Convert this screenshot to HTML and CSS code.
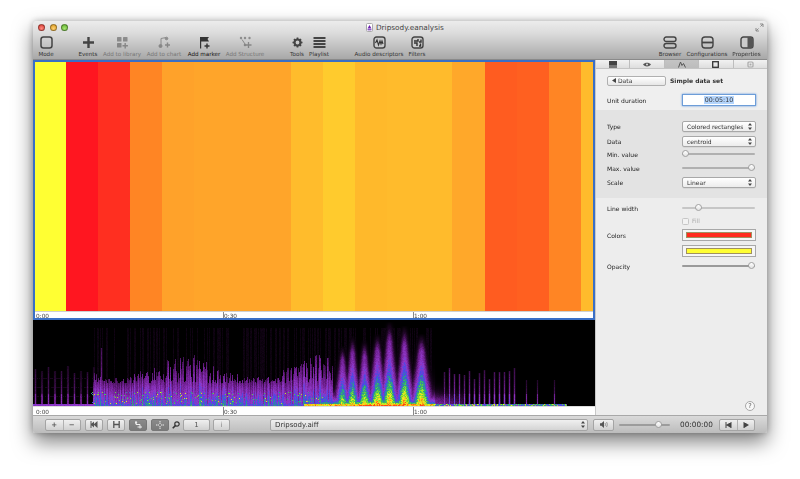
FILE: index.html
```html
<!DOCTYPE html>
<html lang="en">
<head>
<meta charset="utf-8">
<title>Dripsody.eanalysis</title>
<link rel="stylesheet" href="styles.css">
</head>
<body>
<div class="window">
  <header class="titlebar">
    <div class="lights"><i class="light red"></i><i class="light amber"></i><i class="light green"></i></div>
    <div class="title">
      <svg class="doc" width="7" height="9" viewBox="0 0 7 9"><rect x=".5" y=".5" width="6" height="8" rx="1" fill="#fff" stroke="#aaa"/><path d="M1.500 5.500 3.500 2l2 3.500z" fill="#6a1fb0"/><rect x="1.500" y="6" width="4" height="1.400" fill="#8a5ac0"/></svg>
      <span>Dripsody.eanalysis</span>
    </div>
    <svg class="fullscreen" width="9" height="9" viewBox="0 0 9 9"><path d="M5 1h3v3M8 1 5.500 3.500M4 8H1V5M1 8l2.500-2.500" fill="none" stroke="#8a8a8a" stroke-width="1"/></svg>
  </header>
  <nav class="toolbar">
    <div class="tool w26"><svg width="13" height="13" viewBox="0 0 13 13"><rect x="1" y="1" width="11" height="11" rx="2.500" fill="none" stroke="#444" stroke-width="1.500"/></svg><span>Mode</span></div>
    <div class="tool w26 ml16"><svg width="13" height="13" viewBox="0 0 13 13"><path d="M6.500 1v11M1 6.500h11" stroke="#444" stroke-width="2.400" fill="none"/></svg><span>Events</span></div>
    <div class="tool w42 off"><svg width="13" height="13" viewBox="0 0 13 13" fill="#555"><rect x="1" y="1" width="4.500" height="4.500" rx=".6"/><rect x="7" y="1" width="4.500" height="4.500" rx=".6"/><rect x="1" y="7" width="4.500" height="4.500" rx=".6"/><path d="M8.500 7h1.400v2h2v1.400h-2v2H8.500v-2h-2V9h2z"/></svg><span>Add to library</span></div>
    <div class="tool w42 off"><svg width="13" height="13" viewBox="0 0 13 13" fill="none" stroke="#555"><path d="M3 9V2.500L8 1.500"/><circle cx="2.500" cy="10" r="1.500" fill="#555"/><circle cx="8.500" cy="2.500" r="1.300" fill="#555"/><path d="M9.500 6.500v5M7 9h5" stroke-width="1.400"/></svg><span>Add to chart</span></div>
    <div class="tool w38 dark"><svg width="13" height="13" viewBox="0 0 13 13"><path d="M2 12.500V1h9l-1.500 2L11 5.500H3.200v7z" fill="#333"/><path d="M9 7.500v5M6.500 10h5" stroke="#333" stroke-width="1.400"/></svg><span>Add marker</span></div>
    <div class="tool w44 off"><svg width="13" height="13" viewBox="0 0 13 13" fill="#555"><circle cx="2" cy="2" r="1.200"/><circle cx="6" cy="2" r="1.200"/><circle cx="10.500" cy="2" r="1.200"/><path d="M3 3.500 6 8" stroke="#555" fill="none"/><circle cx="6" cy="9" r="1.300"/><path d="M9.500 6v6M7 9h5.500" stroke="#555" stroke-width="1.300" fill="none"/></svg><span>Add Structure</span></div>
    <div class="tool w24 ml18"><svg width="13" height="13" viewBox="0 0 13 13"><circle cx="6.500" cy="6.500" r="3" fill="none" stroke="#444" stroke-width="2.200"/><path d="M6.500 1.500v2M6.500 9.500v2M1.500 6.500h2M9.500 6.500h2M3 3l1.500 1.500M8.500 8.500 10 10M3 10l1.500-1.500M8.500 4.500 10 3" stroke="#444" stroke-width="1.700"/></svg><span>Tools</span></div>
    <div class="tool w20"><svg width="13" height="13" viewBox="0 0 13 13"><path d="M.5 2h12M.5 5h12M.5 8h12M.5 11h12" stroke="#444" stroke-width="1.800"/></svg><span>Playlist</span></div>
    <div class="tool w60 ml20"><svg width="13" height="13" viewBox="0 0 13 13"><rect x="1" y="1" width="11" height="11" rx="2.500" fill="#ccc" stroke="#444" stroke-width="1.400"/><path d="M2.500 7 4 4l1.500 5 1.500-4 1 3 1-3 1 3" fill="none" stroke="#333" stroke-width="1.100"/></svg><span>Audio descriptors</span></div>
    <div class="tool w16"><svg width="13" height="13" viewBox="0 0 13 13"><rect x="1" y="1" width="11" height="11" rx="2.500" fill="#ccc" stroke="#444" stroke-width="1.400"/><path d="M3 5h4V3M3 7h3v3M10 3.500V6H8M9.500 7.500V10H8" fill="none" stroke="#333" stroke-width="1.400"/></svg><span>Filters</span></div>
    <div class="spring"></div>
    <div class="tool w36"><svg width="14" height="13" viewBox="0 0 14 13" fill="none" stroke="#444" stroke-width="1.400"><rect x="1" y="1" width="12" height="4.500" rx="2.200"/><rect x="1" y="7.500" width="12" height="4.500" rx="2.200"/></svg><span>Browser</span></div>
    <div class="tool w38"><svg width="13" height="13" viewBox="0 0 13 13" fill="none" stroke="#444" stroke-width="1.400"><rect x="1" y="1" width="11" height="11" rx="3"/><path d="M1 6.500h11" stroke-width="1.800"/></svg><span>Configurations</span></div>
    <div class="tool w41"><svg width="14" height="13" viewBox="0 0 14 13"><rect x="1" y="1" width="12" height="11" rx="2.500" fill="#ccc" stroke="#444" stroke-width="1.400"/><path d="M7.500 1H10.500a2.500 2.500 0 0 1 2.500 2.500v6a2.500 2.500 0 0 1-2.500 2.500H7.500z" fill="#555"/></svg><span>Properties</span></div>
  </nav>
  <div class="main">
    <section class="views">
      <div class="chart">
        <div class="bars">
          <i style="width:31px;background:#ffff33"></i>
          <i style="width:32px;background:#ff1620"></i>
          <i style="width:32px;background:#ff2f20"></i>
          <i style="width:32px;background:#ff8524"></i>
          <i style="width:32px;background:#ffa22a"></i>
          <i style="width:32px;background:#ffa52a"></i>
          <i style="width:32px;background:#ffa52a"></i>
          <i style="width:33px;background:#ffa52a"></i>
          <i style="width:32px;background:#ffbc2c"></i>
          <i style="width:32px;background:#ffcb2d"></i>
          <i style="width:32px;background:#ffb92b"></i>
          <i style="width:33px;background:#ffbb2c"></i>
          <i style="width:32px;background:#ffbb2c"></i>
          <i style="width:33px;background:#ffa82a"></i>
          <i style="width:32px;background:#ff5c20"></i>
          <i style="width:32px;background:#ff6020"></i>
          <i style="width:32px;background:#ff8524"></i>
          <i style="width:12px;background:#ffbb2c"></i>
        </div>
        <div class="ruler chart-ruler">
          <span class="tick first">0:00</span><span class="tick">0:30</span><span class="tick">1:00</span>
        </div>
      </div>
      <canvas id="spectrogram" class="spectrogram" width="562" height="86"></canvas>
      <div class="ruler spec-ruler">
        <span class="tick first">0:00</span><span class="tick">0:30</span><span class="tick">1:00</span>
      </div>
    </section>
    <aside class="panel">
      <div class="tabs">
        <div class="tab"><svg width="8" height="7" viewBox="0 0 8 7"><rect width="8" height="7" fill="#444"/><rect y="4" width="8" height="3" fill="#777"/></svg></div>
        <div class="tab"><svg width="8" height="5" viewBox="0 0 8 5"><path d="M0 2.500C2 0 6 0 8 2.500 6 5 2 5 0 2.500z" fill="#555"/><circle cx="4" cy="2.500" r="1" fill="#ddd"/></svg></div>
        <div class="tab on"><svg width="8" height="7" viewBox="0 0 8 7"><path d="M.5 6.500 2.500 1 4 4.500 5.500 2.500 7.500 6.500" fill="none" stroke="#555" stroke-width="1"/></svg></div>
        <div class="tab"><svg width="7" height="7" viewBox="0 0 7 7"><rect x=".7" y=".7" width="5.600" height="5.600" fill="none" stroke="#333" stroke-width="1.300"/></svg></div>
        <div class="tab"><svg width="7" height="7" viewBox="0 0 7 7"><rect x="1" y="1" width="5" height="5" rx="1" fill="none" stroke="#aaa" stroke-width="1.200"/><circle cx="3.500" cy="3.500" r="1" fill="#aaa"/></svg></div>
      </div>
      <div class="sec sec-a">
        <div class="head">
          <div class="back"><svg width="4" height="5" viewBox="0 0 4 5"><path d="M4 0v5L0 2.500z" fill="#444"/></svg><span>Data</span></div>
          <strong>Simple data set</strong>
        </div>
        <div class="row gap8">
          <label>Unit duration</label>
          <div class="input"><span>00:05:10</span></div>
        </div>
      </div>
      <div class="sec sec-b">
        <div class="row">
          <label>Type</label>
          <div class="select"><span>Colored rectangles</span><svg class="updown" width="4" height="7" viewBox="0 0 4 7"><path d="M2 0 4 2.500H0zM2 7 0 4.500h4z" fill="#444"/></svg></div>
        </div>
        <div class="row gap3">
          <label>Data</label>
          <div class="select"><span>centroid</span><svg class="updown" width="4" height="7" viewBox="0 0 4 7"><path d="M2 0 4 2.500H0zM2 7 0 4.500h4z" fill="#444"/></svg></div>
        </div>
        <div class="row gap1">
          <label>Min. value</label>
          <div class="slider"><b class="knob" style="left:0"></b></div>
        </div>
        <div class="row gap2">
          <label>Max. value</label>
          <div class="slider"><b class="knob" style="left:66px"></b></div>
        </div>
        <div class="row gap2">
          <label>Scale</label>
          <div class="select"><span>Linear</span><svg class="updown" width="4" height="7" viewBox="0 0 4 7"><path d="M2 0 4 2.500H0zM2 7 0 4.500h4z" fill="#444"/></svg></div>
        </div>
      </div>
      <div class="sec sec-c">
        <div class="row">
          <label>Line width</label>
          <div class="slider faint"><b class="knob" style="left:13px"></b></div>
        </div>
        <div class="row gap1">
          <label></label>
          <div class="check"><i></i><span>Fill</span></div>
        </div>
        <div class="row gap2">
          <label>Colors</label>
          <div class="swatch"><i class="sw-red"></i></div>
        </div>
        <div class="row gap4">
          <label></label>
          <div class="swatch"><i class="sw-yellow"></i></div>
        </div>
        <div class="row gap3">
          <label>Opacity</label>
          <div class="slider dark-track"><b class="knob" style="left:66px"></b></div>
        </div>
        <div class="help-row"><div class="help">?</div></div>
      </div>
    </aside>
  </div>
  <footer class="statusbar">
    <div class="btn seg w36"><span>+</span><span>−</span></div>
    <div class="btn w18"><svg width="8" height="7" viewBox="0 0 8 7"><path d="M3.500 3.500 7.500 0v7zM.5 3.500 4 .5v6zM.5 0h1v7h-1z" fill="#555"/></svg></div>
    <div class="btn w18"><svg width="7" height="7" viewBox="0 0 7 7"><path d="M.8 0v7M6.200 0v7M.8 3.500h5.400" stroke="#555" stroke-width="1.300" fill="none"/></svg></div>
    <div class="btn w18 sel"><svg width="7" height="8" viewBox="0 0 7 8"><path d="M1 .5v3h4v4M1 2h-1l1-1.500 1 1.500zM2.500 6H7" stroke="#eee" fill="none"/></svg></div>
    <div class="btn w18 sel"><svg width="8" height="8" viewBox="0 0 8 8"><path d="M4 0v3M4 5v3M0 4h3M5 4h3" stroke="#eee" stroke-width="1" stroke-dasharray="1.500 .5"/></svg></div>
    <svg class="mag" width="8" height="8" viewBox="0 0 8 8"><circle cx="5" cy="3" r="2.200" fill="none" stroke="#333" stroke-width="1.200"/><path d="M3.400 4.600.7 7.300" stroke="#333" stroke-width="1.500"/></svg>
    <div class="btn w27 tight">1</div>
    <div class="btn w17 tight faint-text">i</div>
    <div class="file"><span>Dripsody.aiff</span><svg class="updown" width="4" height="7" viewBox="0 0 4 7"><path d="M2 0 4 2.500H0zM2 7 0 4.500h4z" fill="#444"/></svg></div>
    <div class="btn w21 near"><svg width="8" height="7" viewBox="0 0 8 7"><path d="M0 2.200h1.500L4 0v7L1.500 4.800H0z" fill="#555"/><path d="M5 2c.6.800.6 2.200 0 3M6.500 1c1 1.400 1 3.600 0 5" fill="none" stroke="#777" stroke-width=".7"/></svg></div>
    <div class="slider volume"><b class="knob" style="left:36px"></b></div>
    <div class="time">00:00:00</div>
    <div class="btn seg w36 transport">
      <span><svg width="7" height="6" viewBox="0 0 7 6"><path d="M.5 0h1v6h-1zM5.500 0h1v6h-1zM1 3 6 0v6z" fill="#444"/></svg></span>
      <span><svg width="6" height="6" viewBox="0 0 6 6"><path d="M.5 0h1v6h-1zM1 0l5 3-5 3z" fill="#444"/></svg></span>
    </div>
  </footer>
</div>
<script src="script.js"></script>
</body>
</html>
```

FILE: styles.css
```css
* { box-sizing: border-box; }
html, body { margin: 0; height: 100%; background: #fff; overflow: hidden; }
body { padding: 21px 33px 0; font-family: "DejaVu Sans", sans-serif; color: #333; }

.window {
  width: 734px; height: 412px; display: flex; flex-direction: column;
  border-radius: 4px 4px 2px 2px; background: #ededed;
  box-shadow: 0 9px 20px rgba(0,0,0,.5), 0 0 6px rgba(0,0,0,.25);
  filter: blur(.3px);
}

.titlebar {
  height: 12px; flex: none; display: flex; align-items: center; position: relative;
  background: linear-gradient(#ececec, #dcdcdc); border-radius: 4px 4px 0 0;
  padding-top: 1px;
}
.lights { display: flex; gap: 4.500px; margin-left: 5px; }
.light { width: 7px; height: 7px; border-radius: 50%; border: .5px solid rgba(0,0,0,.35); }
.red { background: radial-gradient(circle at 50% 70%, #ff8a80, #d8392f); }
.amber { background: radial-gradient(circle at 50% 70%, #ffd070, #d99a20); }
.green { background: radial-gradient(circle at 50% 70%, #a8e870, #5fae2f); }
.title { display: flex; align-items: center; gap: 3px; font-size: 7.300px; color: #444; margin-left: 298px; }
.fullscreen { margin-left: auto; margin-right: 3px; }

.toolbar {
  height: 27px; flex: none; display: flex; align-items: flex-start;
  background: linear-gradient(#dcdcdc, #a8a8a8); border-bottom: 1px solid #8a8a8a;
}
.tool { display: flex; flex-direction: column; align-items: center; flex: none; padding-top: 3px; }
.tool span { font-size: 5.600px; line-height: 8px; margin-top: 1px; color: #333; white-space: nowrap; }
.tool.off svg { opacity: .55; }
.tool.off span { color: #777; }
.tool.dark span { color: #111; }
.w16 { width: 16px; } .w20 { width: 20px; } .w24 { width: 24px; } .w26 { width: 26px; }
.w36 { width: 36px; } .w38 { width: 38px; } .w41 { width: 41px; } .w42 { width: 42px; }
.w44 { width: 44px; } .w60 { width: 60px; } .w18 { width: 18px; } .w27 { width: 27px; }
.w17 { width: 17px; } .w21 { width: 21px; }
.ml16 { margin-left: 16px; } .ml18 { margin-left: 18px; } .ml20 { margin-left: 20px; }
.spring { flex: 1; }

.main { height: 355px; flex: none; display: flex; }
.views { width: 562px; flex: none; display: flex; flex-direction: column; background: #fff; }
.chart { height: 260px; flex: none; border: 2px solid #3a6fc6; display: flex; flex-direction: column; }
.bars { flex: 1; display: flex; }
.bars i { display: block; flex: none; }
.ruler { display: flex; background: #fff; font-size: 5.800px; color: #444; flex: none; overflow: hidden; }
.chart-ruler { height: 7px; line-height: 8px; border-top: 1px solid #d0d0d0; }
.spec-ruler { height: 9px; line-height: 10px; padding-left: 2px; border-top: 1px solid #ddd; }
.tick { flex: none; width: 190px; border-left: 1px solid #888; }
.tick.first { width: 188px; border-left: 0; padding-left: 1px; }
.spectrogram { display: block; width: 562px; height: 86px; background: #000; flex: none; filter: blur(.5px); }

.panel { width: 172px; flex: none; display: flex; flex-direction: column; border-left: 1px solid #c8c8c8; background: #ededed; }
.tabs { height: 9px; flex: none; display: flex; background: linear-gradient(#f2f2f2, #dedede); border-bottom: 1px solid #c4c4c4; }
.tab { flex: 1; display: flex; align-items: center; justify-content: center; border-right: 1px solid #bdbdbd; }
.tab:last-child { border-right: 0; }
.tab.on { background: linear-gradient(#c4c4c4, #bcbcbc); }
.sec { padding-left: 11px; padding-right: 11px; }
.sec-a { height: 41px; flex: none; padding-top: 6px; background: #efefef; }
.sec-b { height: 88px; flex: none; padding-top: 10px; background: #e3e3e3; }
.sec-c { flex: 1; padding-top: 4px; display: flex; flex-direction: column; }
.head { display: flex; align-items: center; height: 11px; }
.back { width: 59px; height: 10px; display: flex; align-items: center; gap: 2px; padding-left: 4px; font-size: 6px; color: #333;
  border: 1px solid #b0b0b0; border-radius: 2px; background: linear-gradient(#fff, #e6e6e6); }
.head strong { margin-left: 4px; font-size: 6px; font-weight: 700; color: #333; }
.row { display: flex; align-items: center; height: 12px; flex: none; }
.row label { width: 75px; flex: none; font-size: 6px; color: #222; }
.gap1 { margin-top: 1px; } .gap2 { margin-top: 2px; } .gap3 { margin-top: 3px; } .gap4 { margin-top: 4px; } .gap8 { margin-top: 8px; }
.input { width: 75px; height: 12px; display: flex; align-items: center; justify-content: center; background: #fff;
  border: 1px solid #6d9dd8; box-shadow: 0 0 2px #5a94dc; font-size: 6.300px; color: #333; }
.input span { background: #b3d4fc; padding: 0 1px; line-height: 8px; }
.select { width: 74px; height: 11px; display: flex; align-items: center; justify-content: space-between; padding: 0 3px 0 4px;
  background: linear-gradient(#fff, #ececec); border: 1px solid #a8a8a8; border-radius: 2px; font-size: 6px; color: #333; box-shadow: 0 .5px 0 rgba(0,0,0,.1); }
.slider { width: 73px; height: 2px; background: #b0b0b0; border-radius: 1px; position: relative; }
.slider.faint { background: #c6c6c6; }
.slider.dark-track { background: #9a9a9a; }
.knob { position: absolute; top: -3px; width: 7px; height: 7px; border-radius: 50%; background: linear-gradient(#fff, #e2e2e2); border: 1px solid #a0a0a0; }
.check { display: flex; align-items: center; gap: 3px; font-size: 5.800px; color: #aaa; }
.check i { width: 7px; height: 7px; border: 1px solid #c6c6c6; border-radius: 1.500px; background: #f2f2f2; }
.swatch { width: 75px; height: 12px; padding: 2px 3px; background: #f6f6f6; border: 1px solid #a8a8a8; display: flex; }
.swatch i { flex: 1; border: .5px solid #a09060; }
.sw-red { background: #ff2a1c; }
.sw-yellow { background: #ffff33; }
.help-row { margin-top: auto; display: flex; justify-content: flex-end; padding: 0 2px 4px 0; margin-right: -1px; }
.help { width: 10px; height: 10px; border-radius: 50%; border: 1px solid #a8a8a8; background: #f8f8f8; font-size: 6.500px; line-height: 8px; text-align: center; color: #555; }

.statusbar { height: 18px; flex: none; display: flex; align-items: center; gap: 4px; padding-left: 12px;
  background: linear-gradient(#dadada, #bcbcbc); border-top: 1px solid #a8a8a8; border-radius: 0 0 2px 2px; }
.btn { height: 12px; flex: none; display: flex; align-items: center; justify-content: center; font-size: 7px; color: #555;
  border: 1px solid #a4a4a4; border-radius: 2px; background: linear-gradient(#f0f0f0, #d0d0d0); }
.btn.sel { background: linear-gradient(#8a8a8a, #7a7a7a); border-color: #777; }
.seg span { flex: 1; display: flex; align-items: center; justify-content: center; height: 100%; font-weight: 700; }
.seg span + span { border-left: 1px solid #b0b0b0; }
.mag { flex: none; margin-left: -1px; }
.tight { margin-left: -1px; }
.faint-text { color: #888; }
.file { width: 318px; height: 12px; flex: none; margin-left: 36px; display: flex; align-items: center; justify-content: space-between; padding: 0 2px 0 4px;
  font-size: 7px; color: #333; border: 1px solid #a4a4a4; border-radius: 2px; background: linear-gradient(#f0f0f0, #d4d4d4); }
.near { margin-left: 1px; }
.slider.volume { width: 51px; flex: none; margin-left: 1px; background: #9c9c9c; }
.time { width: 33px; flex: none; font-size: 7.300px; color: #333; margin-left: 6px; margin-right: 2px; white-space: nowrap; }
```

FILE: script.js
```js
(function () {
  var canvas = document.getElementById('spectrogram');
  var ctx = canvas.getContext('2d');
  var W = canvas.width, H = canvas.height;
  var seed = 12345;
  function rnd() { seed = (seed * 1664525 + 1013904223) >>> 0; return seed / 4294967296; }

  var stops = [
    [0.00, 0, 0, 0], [0.10, 30, 6, 36], [0.26, 105, 28, 135], [0.42, 145, 55, 200],
    [0.54, 70, 75, 230], [0.66, 40, 170, 120], [0.76, 120, 220, 50],
    [0.86, 240, 240, 30], [0.95, 255, 150, 20], [1.00, 255, 70, 20]
  ];
  function colour(v) {
    v = Math.max(0, Math.min(1, v));
    for (var i = 1; i < stops.length; i++) {
      if (v <= stops[i][0]) {
        var a = stops[i - 1], b = stops[i], t = (v - a[0]) / (b[0] - a[0]);
        return [a[1] + (b[1] - a[1]) * t, a[2] + (b[2] - a[2]) * t, a[3] + (b[3] - a[3]) * t];
      }
    }
    return [255, 70, 20];
  }

  /* per-column loudness and reach, for the dense part of the recording */
  var colAmp = [], colTop = [];
  for (var k = 0; k < W; k++) { colAmp.push(rnd()); colTop.push(rnd()); }

  var spikes = [];
  var x;
  for (x = 2; x < 62; x += 6.5) spikes.push([x, 32 + rnd() * 8, 0.22 + rnd() * 0.07, 0.9]);
  spikes.push([68, 58, 0.34, 1]);
  for (x = 411; x < 484; x += 5) spikes.push([x, 26 + rnd() * 12, 0.3 + rnd() * 0.1, 0.9]);
  [493, 504, 521].forEach(function (p) { spikes.push([p, 26, 0.22, 0.7]); });

  var peaks = [
    [291, 32, 0.72, 3], [309, 60, 0.86, 3.5], [319, 70, 0.90, 3.5], [331, 66, 0.92, 3.5],
    [344, 72, 0.96, 4], [356, 84, 0.96, 4], [371, 80, 0.98, 4], [388, 72, 1.0, 4.500]
  ];

  var img = ctx.createImageData(W, H);
  for (var py = 0; py < H; py++) {
    var h = H - 1 - py;
    for (var px = 0; px < W; px++) {
      var v = 0, i, s;
      for (i = 0; i < spikes.length; i++) {
        s = spikes[i];
        var dx = (px - s[0]) / s[3];
        if (Math.abs(dx) > 3 || h >= s[1]) continue;
        var val = Math.exp(-dx * dx) * s[2] * (0.5 + 0.5 * (1 - h / s[1]));
        if (h < 12) val += Math.exp(-dx * dx) * 0.12;
        if (val > v) v = val;
      }
      /* dense middle: purple mass with blue and green low down */
      if (px >= 60 && px < 300) {
        var reach = 22 + 30 * colTop[px] * (0.6 + 0.4 * Math.sin(px * 0.045 + 1));
        if (h < reach) {
          var dens = (0.26 + 0.22 * colAmp[px]) * (0.55 + 0.85 * (1 - h / reach));
          if (dens > v) v = dens;
        }
      }
      for (i = 0; i < peaks.length; i++) {
        s = peaks[i];
        var frac = Math.min(1, h / s[1]);
        var wd = s[3] * (0.7 + 1.6 * Math.pow(1 - frac, 1.5));
        var d = (px - s[0]) / wd;
        var fade = Math.min(1, (1 - frac) * 4);
        var pv = Math.exp(-d * d) * s[2] * (0.30 + 0.70 * Math.pow(1 - frac, 1.8)) * fade;
        if (pv > v) v = pv;
      }
      /* broad loud hump under the big peaks */
      if (px > 285 && px < 402) {
        var hump = Math.exp(-h / 8) * (0.72 + 0.32 * Math.exp(-Math.pow((px - 345) / 44, 2)));
        if (hump > v) v = hump;
      }
      if (px >= 395 && px < 430) {
        var tail = Math.exp(-Math.pow(h / 12, 2)) * 0.36 * (1 - (px - 395) / 60);
        if (tail > v) v = tail;
      }
      /* loud lowest bins */
      if (h < 2 && px < 534) {
        var floorVal = px > 270 ? 0.9 : (px > 60 ? 0.5 : 0.42);
        if (px >= 400) floorVal = 0.44 + rnd() * 0.4;
        if (floorVal > v) v = floorVal;
      }
      /* sprinkled green and yellow in the low bins */
      if (h > 1 && h < 14 && px > 56 && px < 290 && rnd() < 0.06) v = 0.6 + rnd() * 0.24;
      /* faint horizontal partials on the left */
      if (px < 62 && (h === 9 || h === 18 || h === 27) && rnd() < 0.6) v = Math.max(v, 0.08);
      /* faint tall streaks */
      if (px > 60 && px < 400 && h < 78 && colTop[(px + 40) % W] > 0.6) v = Math.max(v, 0.03 + 0.03 * rnd());
      if (v > 0.02) v *= 0.88 + rnd() * 0.22;
      if (px >= 534) v = 0;
      var c = colour(v), o = (py * W + px) * 4;
      img.data[o] = c[0]; img.data[o + 1] = c[1]; img.data[o + 2] = c[2]; img.data[o + 3] = 255;
    }
  }
  ctx.putImageData(img, 0, 0);
})();
```
